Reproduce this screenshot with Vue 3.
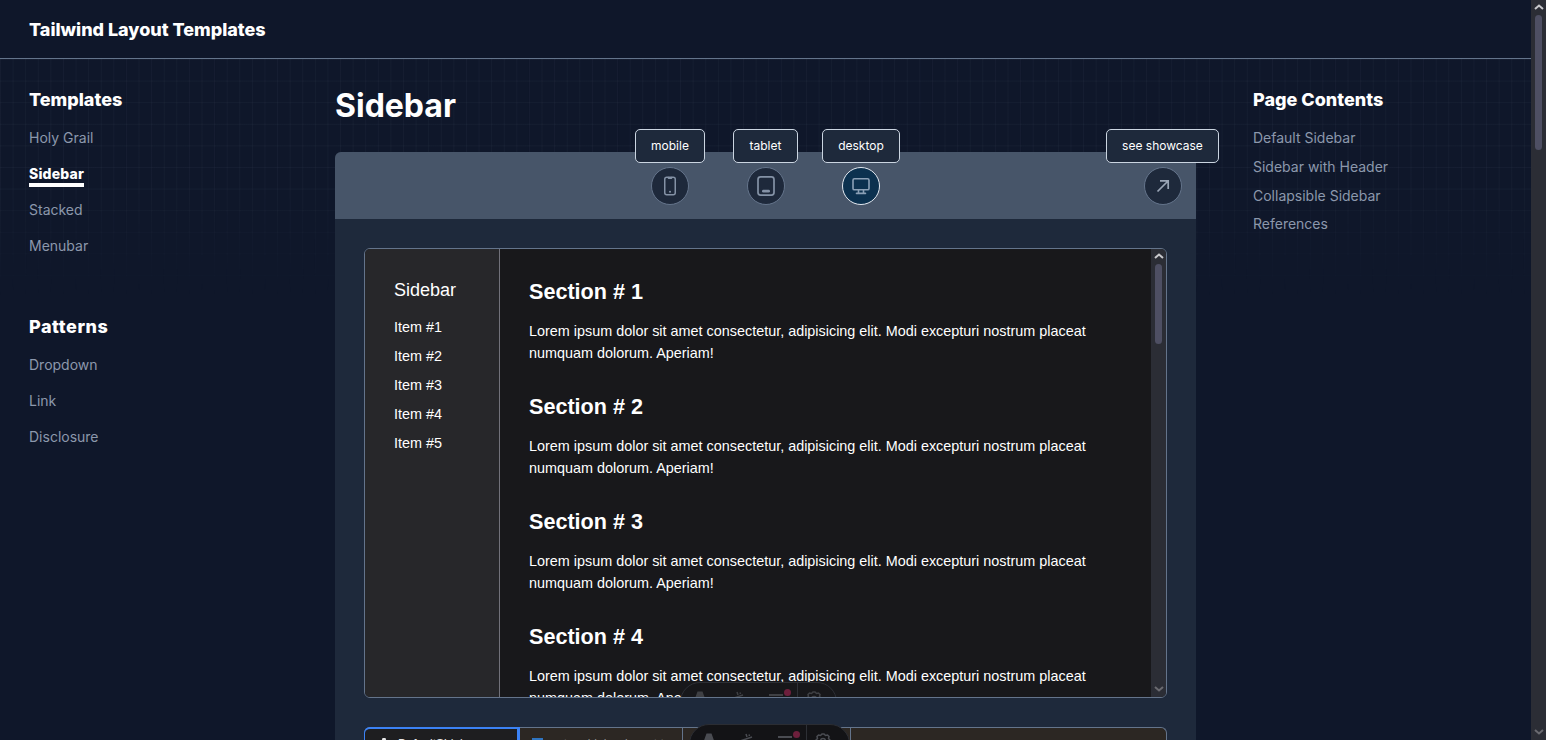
<script setup>
const templates = [
  { label: 'Holy Grail' },
  { label: 'Sidebar', active: true },
  { label: 'Stacked' },
  { label: 'Menubar' },
]
const patterns = ['Dropdown', 'Link', 'Disclosure']
const contents = ['Default Sidebar', 'Sidebar with Header', 'Collapsible Sidebar', 'References']
const items = ['Item #1', 'Item #2', 'Item #3', 'Item #4', 'Item #5']
const sections = ['Section # 1', 'Section # 2', 'Section # 3', 'Section # 4']
</script>

<template>
  <div class="page">
    <div class="scroll">
      <header class="top"><span class="brand">Tailwind Layout Templates</span></header>
      <div class="body">
        <div class="grid-bg"></div>
        <aside class="left">
          <h3 class="nav-title">Templates</h3>
          <ul class="nav">
            <li v-for="t in templates" :key="t.label">
              <a :class="{ active: t.active }">{{ t.label }}</a>
            </li>
          </ul>
          <h3 class="nav-title second">Patterns</h3>
          <ul class="nav">
            <li v-for="p in patterns" :key="p"><a>{{ p }}</a></li>
          </ul>
        </aside>

        <main class="main">
          <h1 class="title">Sidebar</h1>
          <section class="card">
            <div class="toolbar">
              <div class="device dev-mobile">
                <span class="tip">mobile</span>
                <span class="round">
                  <svg width="24" height="24" viewBox="0 0 24 24" fill="none" stroke="#8492a6" stroke-width="1.5" stroke-linecap="round" stroke-linejoin="round">
                    <rect x="6.75" y="3.25" width="10.5" height="17.5" rx="2"/><path d="M10.5 3.5v.8h3v-.8"/><path d="M12 17.8h.05" stroke-width="2"/>
                  </svg>
                </span>
              </div>
              <div class="device dev-tablet">
                <span class="tip">tablet</span>
                <span class="round">
                  <svg width="24" height="24" viewBox="0 0 24 24" fill="none" stroke="#8492a6" stroke-width="1.7" stroke-linecap="round" stroke-linejoin="round">
                    <rect x="4" y="2.85" width="16" height="18.3" rx="2.6"/><path d="M9.4 17.2h5.2" stroke-width="2.8"/>
                  </svg>
                </span>
              </div>
              <div class="device dev-desktop">
                <span class="tip">desktop</span>
                <span class="round on">
                  <svg width="24" height="24" viewBox="0 0 24 24" fill="none" stroke="#8ba0b6" stroke-width="1.6" stroke-linecap="round" stroke-linejoin="round">
                    <rect x="4" y="4.8" width="16" height="11" rx="1.4"/><path d="M9.5 16v3M14.5 16v3M7.5 19.4h9"/>
                  </svg>
                </span>
              </div>
              <div class="device dev-show">
                <span class="tip">see showcase</span>
                <span class="round">
                  <svg width="24" height="24" viewBox="0 0 24 24" fill="none" stroke="#9aa5b6" stroke-width="1.7">
                    <path d="M6.500 17.500 17 7M9 6.800h8.200V15"/>
                  </svg>
                </span>
              </div>
            </div>

            <div class="stage">
              <div class="frame">
                <div class="demo-side">
                  <div class="demo-side-title">Sidebar</div>
                  <div v-for="i in items" :key="i" class="demo-item">{{ i }}</div>
                </div>
                <div class="demo-main">
                  <div v-for="s in sections" :key="s" class="demo-sec">
                    <h2>{{ s }}</h2>
                    <p>Lorem ipsum dolor sit amet consectetur, adipisicing elit. Modi excepturi nostrum placeat numquam dolorum. Aperiam!</p>
                  </div>
                </div>
                <div class="sb inner">
                  <svg class="arrow up" width="10" height="6" viewBox="0 0 10 6"><path d="M1 5 5 1.500 9 5" fill="none" stroke="#c8c8cc" stroke-width="2"/></svg>
                  <span class="thumb inner-thumb"></span>
                  <svg class="arrow down" width="10" height="6" viewBox="0 0 10 6"><path d="M1 1 5 4.500 9 1" fill="none" stroke="#6a6a70" stroke-width="2"/></svg>
                </div>
                <div class="float-bar fb1">
                  <svg class="ic-a" width="16" height="20" viewBox="0 0 16 20"><path d="M5.500 1.500h5L15 14l-4-1.500-1.500-4h-3L5 12.500 1 14Z"/></svg>
                  <svg class="ic-b" width="16" height="20" viewBox="0 0 16 20" fill="none"><path d="M2 8l12-4M8 1l1 3M11 1.500l.5 1.500M3 9l1.500 9h7L13 7"/></svg>
                  <span class="fb-dash"><i></i></span>
                  <span class="fb-sep"></span>
                  <svg class="ic-g" width="18" height="20" viewBox="0 0 18 20" fill="none"><path d="M6.500 2.500 8 1h2l1.500 1.500 2-.5 1.500 1.500-.5 2L16 7v2l-1.500 1.500.5 2-1.500 1.500-2-.5L10 15H8l-1.500-1.500-2 .5L3 12.500l.5-2L2 9V7l1.500-1.500-.5-2L4.500 2Z"/><circle cx="9" cy="8" r="2.500"/></svg>
                </div>
              </div>

              <div class="frame2">
                <div class="tab tab-on">
                  <svg width="12" height="14" viewBox="0 0 12 14" fill="#e6e6e6"><path d="M4.500 1h3L11 12H1Z"/></svg>
                  <span>DefaultSidebar.vue</span>
                </div>
                <div class="tab tab-off">
                  <i class="tab-box"></i>
                  <span>astro-sidebar-layout.ts</span>
                </div>
                <div class="tab tab-blank"></div>
                <div class="float-bar fb2">
                  <svg class="ic-a" width="16" height="20" viewBox="0 0 16 20"><path d="M5.500 1.500h5L15 14l-4-1.500-1.500-4h-3L5 12.500 1 14Z"/></svg>
                  <svg class="ic-b" width="16" height="20" viewBox="0 0 16 20" fill="none"><path d="M2 8l12-4M8 1l1 3M11 1.500l.5 1.500M3 9l1.500 9h7L13 7"/></svg>
                  <span class="fb-dash"><i></i></span>
                  <span class="fb-sep"></span>
                  <svg class="ic-g" width="18" height="20" viewBox="0 0 18 20" fill="none"><path d="M6.500 2.500 8 1h2l1.500 1.500 2-.5 1.500 1.500-.5 2L16 7v2l-1.500 1.500.5 2-1.500 1.500-2-.5L10 15H8l-1.500-1.500-2 .5L3 12.500l.5-2L2 9V7l1.500-1.500-.5-2L4.500 2Z"/><circle cx="9" cy="8" r="2.500"/></svg>
                </div>
              </div>
            </div>
          </section>
        </main>

        <aside class="right">
          <h3 class="nav-title">Page Contents</h3>
          <ul class="toc">
            <li v-for="c in contents" :key="c">{{ c }}</li>
          </ul>
        </aside>
      </div>
    </div>
    <div class="sb outer">
      <svg class="arrow up" width="10" height="6" viewBox="0 0 10 6"><path d="M1 5 5 1.500 9 5" fill="none" stroke="#c8c8cc" stroke-width="2"/></svg>
      <span class="thumb outer-thumb"></span>
      <svg class="arrow down" width="10" height="6" viewBox="0 0 10 6"><path d="M1 1 5 4.500 9 1" fill="none" stroke="#6a6a70" stroke-width="2"/></svg>
    </div>
  </div>
</template>

<style>
html, body { margin: 0; background: #0f172a; overflow: hidden; }
</style>

<style scoped>
.page { position: relative; width: 1546px; height: 740px; overflow: hidden; background: #0f172a; color: #fff; font-family: Inter, "Noto Sans", sans-serif; display: flex; }
.scroll { width: 1531px; height: 740px; overflow: hidden; flex: none; }
.top { height: 58px; border-bottom: 1px solid #64748b; display: flex; align-items: center; padding-left: 29px; }
.brand { font-weight: 800; font-size: 18px; letter-spacing: -0.02px; }
.body { position: relative; display: flex; height: 681px; }
.grid-bg { position: absolute; left: 0; right: 0; top: 0; height: 240px; pointer-events: none;
  background-image: linear-gradient(rgba(148,163,184,.05) 1px, transparent 1px), linear-gradient(90deg, rgba(148,163,184,.05) 1px, transparent 1px);
  background-size: 12.6px 21.6px;
  -webkit-mask-image: linear-gradient(#000 50%, transparent);
  mask-image: linear-gradient(#000 50%, transparent); }
.left { position: relative; width: 335px; flex: none; padding: 30px 0 0 29px; box-sizing: border-box; }
.nav-title { margin: 0; font-size: 18px; font-weight: 800; line-height: 22px; color: #fff; }
.nav-title.second { margin-top: 59px; letter-spacing: .55px; }
.nav { list-style: none; margin: 16px 0 0; padding: 0; display: flex; flex-direction: column; gap: 14px; }
.nav li { height: 22px; }
.nav a { display: inline-block; font-size: 14px; line-height: 22px; color: #8c98ac; }
.nav a.active { color: #fff; font-weight: 800; line-height: 22px; border-bottom: 4px solid #fff; height: 20px; letter-spacing: .2px; }
.main { position: relative; width: 861px; flex: none; }
.title { margin: 0; font-size: 32px; font-weight: 700; line-height: 40px; padding-top: 27px; }
.card { margin-top: 26px; background: #1e293b; border-radius: 6px 6px 0 0; position: relative; height: 700px; }
.toolbar { position: relative; height: 67px; background: #475569; border-radius: 6px 6px 0 0; }
.device { position: absolute; top: -23px; display: flex; flex-direction: column; align-items: center; gap: 4px; }
.dev-mobile { left: 300px; width: 70px; }
.dev-tablet { left: 398px; width: 65px; }
.dev-desktop { left: 487px; width: 78px; }
.dev-show { left: 771px; width: 113px; align-items: flex-end; }
.tip { box-sizing: border-box; height: 34px; width: 100%; padding-bottom: 2px; display: flex; align-items: center; justify-content: center; background: #1e293b; border: 1px solid #cbd5e1; border-radius: 5px; font-size: 12px; font-weight: 400; color: #fff; white-space: nowrap; }
.round { width: 38px; height: 38px; box-sizing: border-box; border: 1px solid #64748b; border-radius: 50%; background: #1e293b; display: flex; align-items: center; justify-content: center; }
.round.on { background: #0c314f; border-color: #e2e8f0; }
.dev-show .round { margin-right: 37px; }
.stage { padding: 29px 29px 0; }
.frame { position: relative; height: 450px; box-sizing: border-box; border: 1px solid #64748b; border-radius: 6px; display: flex; overflow: hidden; background: #18181b; font-family: "Liberation Sans", Arial, sans-serif; }
.demo-side { flex: none; background: #27272a; border-right: 1px solid #71717a; padding: 29px 0 0 29px; width: 105px; }
.demo-side-title { font-size: 18px; line-height: 24px; margin-bottom: 15px; }
.demo-item { font-size: 14.4px; line-height: 20px; margin-bottom: 9px; }
.demo-main { flex: 1; padding: 29px 16px 0 29px; overflow: hidden; }
.demo-sec { height: 115px; }
.demo-sec h2 { margin: 0; font-size: 21.6px; line-height: 28px; font-weight: 700; }
.demo-sec p { margin: 14px 0 0; font-size: 14.4px; line-height: 22px; }
.sb { background: #2b2d35; flex: none; position: relative; }
.sb.inner { width: 15px; }
.sb.outer { width: 15px; height: 740px; }
.arrow { position: absolute; left: 50%; margin-left: -5px; }
.arrow.up { top: 4px; }
.arrow.down { bottom: 5px; }
.thumb { position: absolute; left: 50%; margin-left: -3.5px; width: 7px; background: #4e4f63; border-radius: 3.5px; }
.inner-thumb { top: 15px; height: 80px; }
.outer-thumb { top: 15px; height: 135px; }
.float-bar { position: absolute; background: #17171a; border: 1px solid #2d2f35; border-radius: 20px; display: flex; align-items: flex-start; box-sizing: border-box; padding: 7px 0 0 11px; height: 40px; }
.fb1 { left: 315px; top: 433px; width: 157px; --ic: #3f4044; }
.fb2 { left: 324px; top: -4px; width: 161px; background: #131316; border-color: #2b2d33; --ic: #4a4c52; }
.ic-a path { fill: var(--ic); }
.ic-b { margin: 1px 0 0 21px; }
.ic-b path { stroke: var(--ic); stroke-width: 1.5; }
.fb-dash { position: relative; margin: 4px 0 0 24px; width: 14px; height: 2px; background: var(--ic); }
.fb-dash i { position: absolute; right: -8px; top: -5px; width: 7px; height: 7px; border-radius: 50%; background: #6d1f3c; }
.fb-sep { width: 1px; height: 40px; margin: -7px 0 0 14px; background: #2d2f35; }
.ic-g { margin: 1px 0 0 7px; }
.ic-g path, .ic-g circle { stroke: var(--ic); stroke-width: 1.5; }
.frame2 { position: relative; margin-top: 29px; height: 60px; box-sizing: border-box; border: 1px solid #64748b; border-bottom: 0; border-radius: 6px 6px 0 0; background: #2c2723; display: flex; }
.tab { box-sizing: border-box; height: 32px; margin-top: -1px; display: flex; align-items: center; gap: 8px; font-family: "Liberation Sans", Arial, sans-serif; font-size: 12px; white-space: nowrap; }
.tab-on { width: 156px; background: #1e1e20; border-top: 2px solid #3b82f6; border-right: 3px solid #3b82f6; border-left: 1px solid #3b82f6; border-radius: 6px 0 0 0; margin-left: -1px; padding: 0 0 0 13px; color: #e6e6e6; }
.tab-off { width: 163px; border-right: 1px solid #64748b; padding: 0 0 0 12px; color: #8f8f8f; border-top: 1px solid #64748b; }
.tab-blank { width: 168px; border-right: 1px solid #64748b; border-top: 1px solid #64748b; }
.tab-box { width: 11px; height: 11px; background: #2f74c0; display: block; }
.right { position: relative; padding: 30px 0 0 57px; }
.toc { list-style: none; margin: 16px 0 0; padding: 0; font-size: 14px; line-height: 22px; color: #8c98ac; display: flex; flex-direction: column; gap: 6.8px; }
</style>
